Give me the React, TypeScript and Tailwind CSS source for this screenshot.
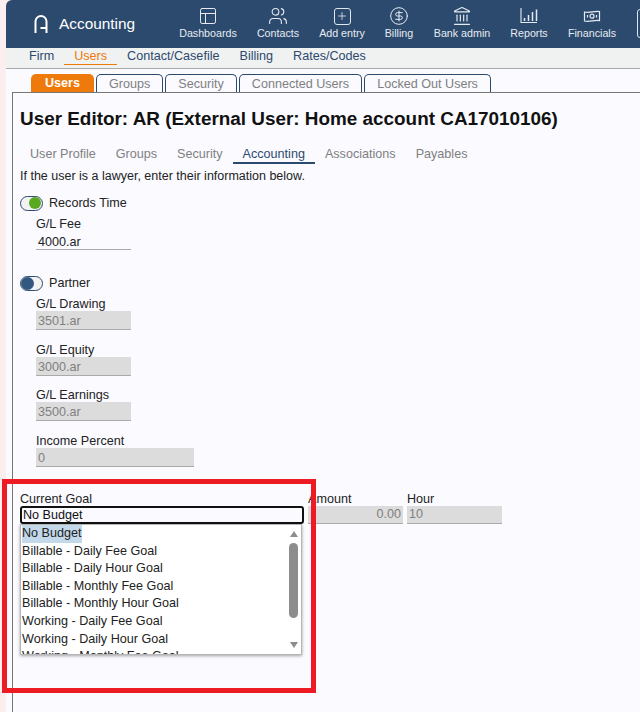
import { Landmark, PanelsTopLeft, CircleDollarSign, Plus, Users } from "lucide-react";

const ReportsIcon = (
  <svg width="18" height="18" viewBox="0 0 18 18" fill="none" stroke="currentColor" strokeWidth="1.1">
    <path d="M1 1v14.5h16" />
    <path d="M4.5 14v-3M8.5 14V8M12.5 14V5M16.5 14V2.5" strokeWidth="1.5" />
  </svg>
);

const FinancialsIcon = (
  <svg width="18" height="14" viewBox="0 0 18 14" fill="none" stroke="currentColor" strokeWidth="1.2">
    <path d="M1.5 3c5 1.2 10-1.2 15-.4v9c-5-.8-10 1.6-15 .4z" />
    <circle cx="9" cy="7.2" r="2" />
    <path d="M4.5 6v2.4M13.5 6v2.4" />
  </svg>
);

const navItems = [
  { label: "Dashboards", icon: <PanelsTopLeft size={20} strokeWidth={1.2} />, width: "w-[70px]" },
  { label: "Contacts", icon: <Users size={20} strokeWidth={1.3} />, width: "w-[70px]" },
  {
    label: "Add entry",
    icon: (
      <span className="flex h-[17px] w-[17px] items-center justify-center rounded-[3px] border border-[#dfe6ee]">
        <Plus size={12} strokeWidth={1.6} />
      </span>
    ),
    width: "w-[58px]",
  },
  { label: "Billing", icon: <CircleDollarSign size={20} strokeWidth={1.2} />, width: "w-[56px]" },
  { label: "Bank admin", icon: <Landmark size={20} strokeWidth={1.4} />, width: "w-[70px]" },
  { label: "Reports", icon: ReportsIcon, width: "w-[64px]" },
  { label: "Financials", icon: FinancialsIcon, width: "w-[62px]" },
];

const subNav = ["Firm", "Users", "Contact/Casefile", "Billing", "Rates/Codes"];
const tabs = ["Groups", "Security", "Connected Users", "Locked Out Users"];
const editorTabs = ["User Profile", "Groups", "Security", "Accounting", "Associations", "Payables"];
const goals = [
  "Billable - Daily Fee Goal",
  "Billable - Daily Hour Goal",
  "Billable - Monthly Fee Goal",
  "Billable - Monthly Hour Goal",
  "Working - Daily Fee Goal",
  "Working - Daily Hour Goal",
  "Working - Monthly Fee Goal",
];

function DisabledField({ label, value, className }: { label: string; value: string; className: string }) {
  return (
    <div className={`ml-4 ${className}`}>
      <div className="h-[14px] leading-[16px]">{label}</div>
      <div className={`mt-[1px] h-[19px] border-b border-[#aaa] bg-[#dcdcdc] pl-[2px] leading-[20px] text-[#808080] ${label === "Income Percent" ? "w-[158px]" : "w-[95px]"}`}>
        {value}
      </div>
    </div>
  );
}

function Toggle({ label, on }: { label: string; on: boolean }) {
  return (
    <div className="flex h-[16px] items-center gap-[6px]">
      <span className={`flex h-[15px] w-[23px] items-center rounded-full border border-[#2c4a6e] bg-[#f3f3f3] ${on ? "justify-end pr-[1px]" : "justify-start"}`}>
        <span className={`rounded-full ${on ? "h-[12px] w-[12px] bg-[#5aa820]" : "h-[13px] w-[13px] bg-[#34577f]"}`} />
      </span>
      <span>{label}</span>
    </div>
  );
}

export default function App() {
  return (
    <div className="relative h-[712px] w-[640px] overflow-hidden bg-[#faeeee] pl-[6px] font-['Liberation_Sans',sans-serif] text-[12.6px] text-[#222]">
      <header className="flex h-[48px] items-start overflow-hidden rounded-tl-[6px] bg-[#2c4a6e] text-white">
        <div className="flex h-[48px] w-[167px] shrink-0 items-center pl-[28px]">
          <svg width="14" height="18" viewBox="0 0 14 18" fill="none" stroke="white" strokeWidth="2">
            <path d="M1.5 18V6.5a5.5 5.5 0 0 1 11 0V18" />
            <path d="M6.5 13h6" />
          </svg>
          <span className="ml-[11px] text-[15.4px]">Accounting</span>
        </div>
        <nav className="flex shrink-0 pt-[5px]">
          {navItems.map((item) => (
            <div key={item.label} className={`${item.width} flex shrink-0 flex-col items-center text-[#e6ebf1]`}>
              <div className="flex h-[22px] items-center">{item.icon}</div>
              <div className="text-[10.7px] leading-[12px]">{item.label}</div>
            </div>
          ))}
          <div className="ml-[14px] mt-[4px] h-[29px] w-[20px] shrink-0 rounded-[3px] border border-[#dfe6ee]" />
        </nav>
      </header>

      <div className="flex h-[21px] items-start border-b border-[#aaa] bg-[#f0f1f1] pl-[13px] text-[#2c4a6e]">
        {subNav.map((item) => (
          <span key={item} className={`h-[17px] px-[10px] leading-[16px] ${item === "Users" ? "border-b border-[#ee7a0c] text-[#ee7a0c]" : ""}`}>
            {item}
          </span>
        ))}
      </div>

      <div className="h-[643px] bg-[#fafaff] pl-[6px]">
        <div className="flex h-[23px] items-end pl-[19px]">
          <span className="flex h-[18px] w-[63px] items-center justify-center rounded-t-[5px] bg-[#ee7a0c] pt-[1px] font-bold text-white">Users</span>
          {tabs.map((tab) => (
            <span key={tab} className="ml-[2px] flex h-[18px] items-center rounded-t-[5px] border border-b-0 border-[#2c4a6e] px-[12px] pt-[1px] text-[#808080]">
              {tab}
            </span>
          ))}
        </div>

        <main className="h-[620px] border-l border-t border-[#777] pl-[7px]">
          <h1 className="pt-[15px] text-[18.9px] font-bold leading-[22px] text-[#111]">User Editor: AR (External User: Home account CA17010106)</h1>

          <div className="mt-[14px] flex h-[20px] text-[#808080]">
            {editorTabs.map((tab) => (
              <span key={tab} className={`px-[10px] leading-[20px] ${tab === "Accounting" ? "border-b-2 border-[#2c4a6e] text-[#2c4a6e]" : ""}`}>
                {tab}
              </span>
            ))}
          </div>
          <p className="mt-[5px] text-[12.5px] leading-[14px]">If the user is a lawyer, enter their information below.</p>

          <div className="mt-[12px]">
            <Toggle label="Records Time" on />
          </div>
          <div className="ml-4 mt-[6px]">
            <div className="h-[14px] leading-[14px]">G/L Fee</div>
            <div className="mt-[1px] h-[18px] w-[95px] border-b border-[#aaa] pl-[2px] leading-[20px]">4000.ar</div>
          </div>

          <div className="mt-[25px]">
            <Toggle label="Partner" on={false} />
          </div>
          <DisabledField label="G/L Drawing" value="3501.ar" className="mt-[5px]" />
          <DisabledField label="G/L Equity" value="3000.ar" className="mt-[12px]" />
          <DisabledField label="G/L Earnings" value="3500.ar" className="mt-[11px]" />
          <DisabledField label="Income Percent" value="0" className="mt-[12px]" />

          <div className="mt-[24px] flex">
            <div className="w-[288px]">
              <div className="h-[14px] leading-[16px]">Current Goal</div>
              <div className="mt-[1px] h-[18px] w-[284px] rounded-[3px] border-2 border-[#111] pl-[1px] leading-[14px] text-[#111]">No Budget</div>
              <div className="relative h-[131px] w-[282px] overflow-hidden border border-[#b5b5b5] bg-white pl-[1px] shadow-[0_1px_3px_rgba(0,0,0,0.35)]">
                <div className="h-[17.6px] w-fit bg-[#c3d9e9] leading-[17.6px]">No Budget</div>
                {goals.map((goal) => (
                  <div key={goal} className="h-[17.6px] leading-[17.6px]">{goal}</div>
                ))}
                <div className="absolute right-[3px] top-[6px] flex h-[117px] w-[9px] flex-col items-center">
                  <span className="border-x-[4px] border-b-[6px] border-x-transparent border-b-[#8d8d8d]" />
                  <span className="mt-[6px] h-[75px] w-[9px] rounded-full bg-[#8d8d8d]" />
                  <span className="mt-auto border-x-[4px] border-t-[6px] border-x-transparent border-t-[#8d8d8d]" />
                </div>
              </div>
            </div>
            <div>
              <div className="h-[14px] leading-[16px]">Amount</div>
              <div className="mt-[1px] h-[18px] w-[95px] border-b border-[#aaa] bg-[#dcdcdc] pr-[2px] text-right leading-[17px] text-[#808080]">0.00</div>
            </div>
            <div className="ml-[4px]">
              <div className="h-[14px] leading-[16px]">Hour</div>
              <div className="mt-[1px] h-[18px] w-[95px] border-b border-[#aaa] bg-[#dcdcdc] pl-[2px] leading-[17px] text-[#808080]">10</div>
            </div>
          </div>
        </main>
      </div>

      <div className="pointer-events-none absolute left-[2px] top-[479px] h-[214px] w-[314px] border-[5px] border-[#ed1c24]" />
    </div>
  );
}
